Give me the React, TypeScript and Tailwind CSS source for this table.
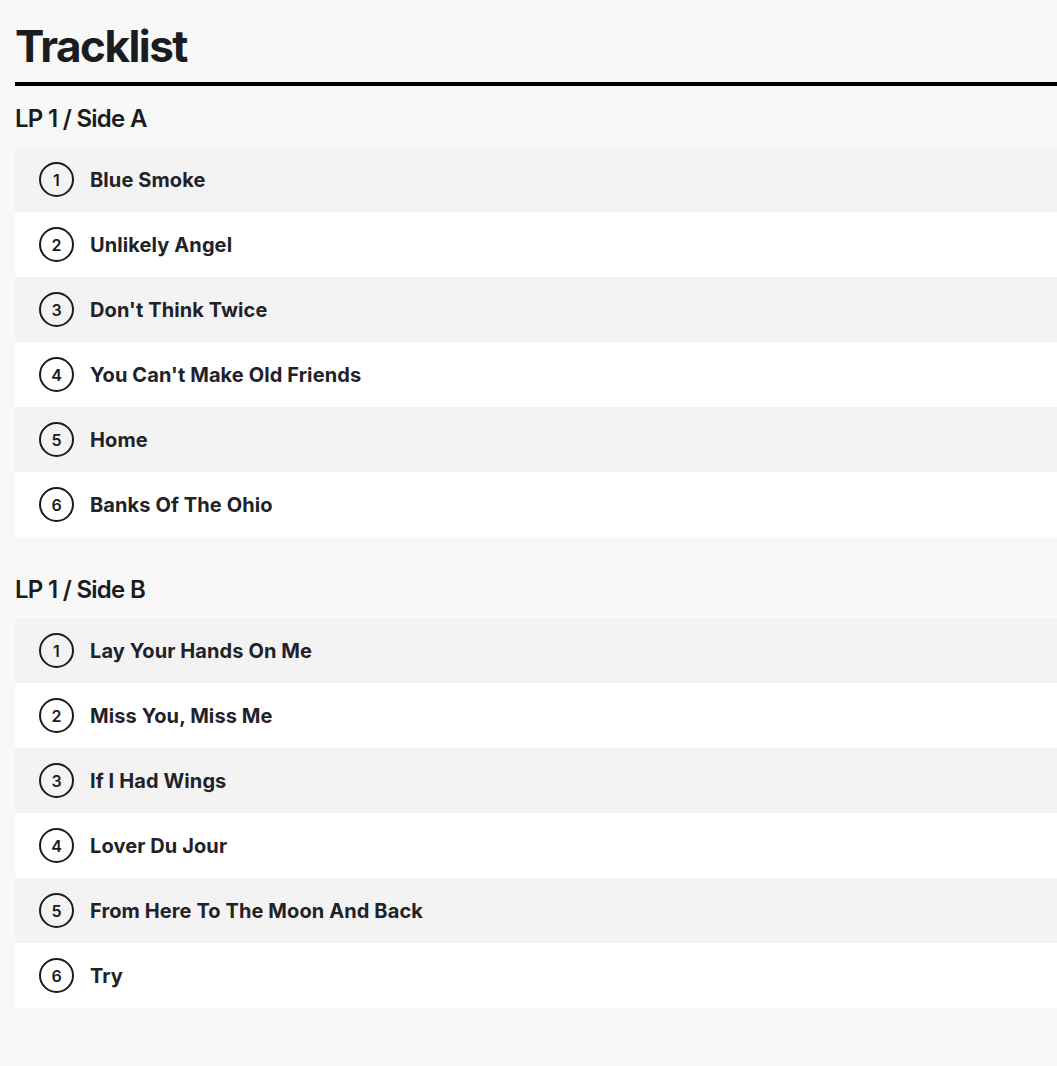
import React from 'react'

const sides = [
  {
    title: 'LP 1 / Side A',
    tracks: ['Blue Smoke', 'Unlikely Angel', "Don't Think Twice", "You Can't Make Old Friends", 'Home', 'Banks Of The Ohio'],
  },
  {
    title: 'LP 1 / Side B',
    tracks: ['Lay Your Hands On Me', 'Miss You, Miss Me', 'If I Had Wings', 'Lover Du Jour', 'From Here To The Moon And Back', 'Try'],
  },
]

const TrackRow = ({ n, name }: { n: number; name: string }) => (
  <li className="flex items-center h-[65px] pl-6 gap-4 odd:bg-[#f3f3f3] even:bg-white">
    <span className="flex items-center justify-center w-[35px] h-[35px] rounded-full border-[2.5px] border-[#1a1c20] text-[16px] font-semibold text-[#1a1c20]">
      {n}
    </span>
    <span className="text-[20px] font-bold tracking-[0.005em] text-[#1f2228]">{name}</span>
  </li>
)

export default function App() {
  return (
    <div className="min-h-[1066px] bg-[#f8f8f8] pl-[15px] pt-[19px] pb-14 text-[#1a1c20]" style={{ fontFamily: 'Inter, "Noto Sans", sans-serif' }}>
      <h1 className="text-[44px] font-bold leading-[54px] tracking-[-0.035em] pb-[9px] border-b-4 border-black">Tracklist</h1>
      {sides.map((side, i) => (
        <section key={side.title} className={i === 0 ? 'mt-[17px]' : 'mt-[37px]'}>
          <h2 className="text-[24px] font-semibold leading-8 tracking-[-0.03em] mb-3">{side.title}</h2>
          <ul>
            {side.tracks.map((t, j) => (
              <TrackRow key={t} n={j + 1} name={t} />
            ))}
          </ul>
        </section>
      ))}
    </div>
  )
}
